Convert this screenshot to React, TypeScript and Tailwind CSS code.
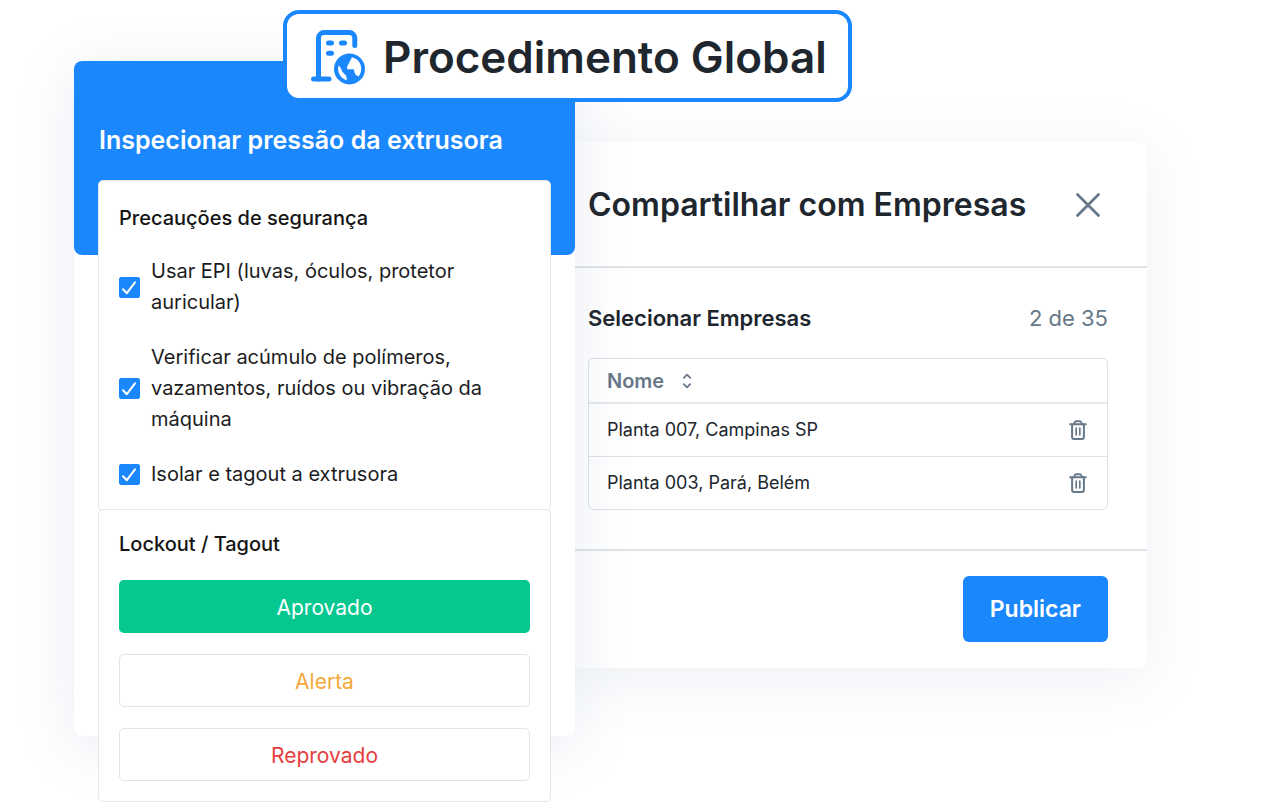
import { useState } from "react";
import type { ReactNode } from "react";

const precautions: string[] = [
  "Usar EPI (luvas, óculos, protetor auricular)",
  "Verificar acúmulo de polímeros, vazamentos, ruídos ou vibração da máquina",
  "Isolar e tagout a extrusora",
];

const companies: string[] = ["Planta 007, Campinas SP", "Planta 003, Pará, Belém"];

function BuildingGlobeIcon() {
  return (
    <svg width="54" height="56" viewBox="0 0 54 56" fill="none" className="shrink-0" aria-hidden="true">
      <path
        d="M7.500 50V9.100a5.500 5.500 0 0 1 5.500-5.500H38.300a5.500 5.500 0 0 1 5.500 5.500v7.500"
        stroke="#1a87fd"
        strokeWidth="5"
        strokeLinecap="round"
      />
      <path d="M2.500 50H18" stroke="#1a87fd" strokeWidth="5" strokeLinecap="round" />
      <path d="M17.500 14h3M30.500 14h3M17.500 24.200h3" stroke="#1a87fd" strokeWidth="5" strokeLinecap="round" />
      <circle cx="38.500" cy="39.900" r="15.500" fill="#1a87fd" />
      <path d="M40.900 28.300c3 .6 5.600 2.200 7.300 4.700 2.900 4.300 2.800 10.300-.7 14.600l-3.200-2.200-1.600-5.200h-6.400l-.2-2.600 2.900-5.300z" fill="#fff" />
      <path d="M27.600 36.300c-1.100 3.900-.3 8.200 2.300 11.300 1.600 1.900 3.600 3.100 5.900 3.700l-.5-4.400-4-4.200-1.500-3.600z" fill="#fff" />
    </svg>
  );
}

function CloseIcon() {
  return (
    <svg width="26" height="26" viewBox="0 0 26 26" fill="none" aria-hidden="true">
      <path d="M2.500 2.500l21 21M23.500 2.500l-21 21" stroke="#677889" strokeWidth="2.800" strokeLinecap="round" />
    </svg>
  );
}

function SortIcon() {
  return (
    <svg width="10" height="16" viewBox="0 0 10 16" fill="none" aria-hidden="true">
      <path
        d="M1.800 4.800L5 1.700 8.200 4.800M1.800 11.200L5 14.300 8.200 11.200"
        stroke="#677889"
        strokeWidth="1.800"
        strokeLinecap="round"
        strokeLinejoin="round"
      />
    </svg>
  );
}

function TrashIcon() {
  return (
    <svg width="18" height="20" viewBox="0 0 18 20" fill="none" stroke="#677889" strokeLinecap="round" aria-hidden="true">
      <path d="M1.200 4.300h15.600" strokeWidth="2" />
      <path d="M5 4l.8-1.900c.2-.6.700-.9 1.300-.9h3.800c.6 0 1.100.3 1.300.9L13 4" strokeWidth="1.900" />
      <path d="M3.100 4.500v12.600c0 1.100.8 1.900 1.900 1.900h8c1.100 0 1.900-.8 1.900-1.900V4.500" strokeWidth="2" />
      <path d="M7.200 8.200v6.600M10.800 8.200v6.600" strokeWidth="1.700" />
    </svg>
  );
}

function CheckRow({ label }: { label: string }) {
  const [checked, setChecked] = useState(true);
  return (
    <label className="flex items-center gap-[11px] text-[20px] leading-[31px] text-[#1c1c1e]">
      <span className="relative block size-[21px] shrink-0">
        <input
          type="checkbox"
          checked={checked}
          onChange={() => setChecked(!checked)}
          className="peer block size-[21px] appearance-none rounded-[2px] border border-[#1a87fd] bg-white checked:bg-[#1a87fd]"
        />
        <svg
          viewBox="0 0 21 21"
          fill="none"
          className="pointer-events-none absolute inset-0 hidden size-[21px] peer-checked:block"
          aria-hidden="true"
        >
          <path d="M4 12.200l3.800 4L16 5.300" stroke="#fff" strokeWidth="2" strokeLinecap="round" strokeLinejoin="round" />
        </svg>
      </span>
      <span>{label}</span>
    </label>
  );
}

function Panel({ title, className, children }: { title: string; className: string; children: ReactNode }) {
  return (
    <section className={`rounded-[5px] border border-[#e4e6ea] bg-white px-5 pb-5 ${className}`}>
      <h3 className="text-[20px] font-medium leading-[32px] text-[#141414]">{title}</h3>
      {children}
    </section>
  );
}

function ProcedureCard() {
  return (
    <article className="relative z-10 min-w-0 flex-[501] rounded-lg bg-white shadow-[0_10px_60px_rgba(80,110,160,0.13)]">
      <header className="h-[194px] rounded-lg bg-[#1a87fd] px-[25px] pt-[62px]">
        <h2 className="text-[25px] font-semibold leading-[34px] text-white">Inspecionar pressão da extrusora</h2>
      </header>
      <div className="-mt-[75px] -mb-[66px] mx-6 flex flex-col">
        <Panel title="Precauções de segurança" className="pt-[21px]">
          <div className="mt-[22px] flex flex-col gap-6">
            {precautions.map((label) => (
              <CheckRow key={label} label={label} />
            ))}
          </div>
        </Panel>
        <Panel title="Lockout / Tagout" className="-mt-[2px] pt-[18px]">
          <div className="mt-5 flex flex-col gap-[21px] text-[21px]">
            <button type="button" className="h-[53px] rounded-[5px] bg-[#04c88f] pt-0.5 text-white">
              Aprovado
            </button>
            <button type="button" className="h-[53px] rounded-[5px] border border-[#e2e4e8] bg-white pt-0.5 text-[#f5a93b]">
              Alerta
            </button>
            <button type="button" className="h-[53px] rounded-[5px] border border-[#e2e4e8] bg-white pt-0.5 text-[#e5403f]">
              Reprovado
            </button>
          </div>
        </Panel>
      </div>
    </article>
  );
}

function ShareDialog() {
  return (
    <section
      aria-label="Compartilhar com Empresas"
      className="mt-[81px] min-w-0 flex-[572] rounded-r-lg bg-white shadow-[0_10px_60px_rgba(80,110,160,0.10)]"
    >
      <header className="flex h-[126px] items-center justify-between border-b-2 border-[#e1e3e7] pt-0.5 pl-[13px] pr-[46px]">
        <h2 className="text-[32px] font-semibold leading-[40px]">Compartilhar com Empresas</h2>
        <button type="button" aria-label="Fechar">
          <CloseIcon />
        </button>
      </header>
      <div className="pt-[35px] pr-[39px] pb-[39px] pl-[13px]">
        <div className="flex items-center justify-between text-[22px] leading-[30px]">
          <h3 className="font-semibold">Selecionar Empresas</h3>
          <p className="text-[#677889]">2 de 35</p>
        </div>
        <div className="mt-[25px] rounded-[5px] border border-[#dfe1e6]">
          <table className="w-full border-collapse text-left">
            <thead>
              <tr className="h-11 border-b-2 border-[#e6e8eb]">
                <th scope="col" colSpan={2} className="px-[18px] text-[20px] font-semibold text-[#677889]">
                  <button type="button" className="flex items-center gap-[18px]">
                    Nome
                    <SortIcon />
                  </button>
                </th>
              </tr>
            </thead>
            <tbody>
              {companies.map((name) => (
                <tr key={name} className="h-[53px] border-b border-[#dfe1e6] last:border-b-0">
                  <td className="pl-[18px] text-[18px]">{name}</td>
                  <td className="w-12 pr-5">
                    <button type="button" aria-label={`Remover ${name}`} className="ml-auto block">
                      <TrashIcon />
                    </button>
                  </td>
                </tr>
              ))}
            </tbody>
          </table>
        </div>
      </div>
      <footer className="flex justify-end border-t-2 border-[#dfe2e8] pt-[25px] pr-[39px] pb-[26px]">
        <button type="button" className="h-[66px] rounded-md bg-[#1a87fd] px-[27px] text-[23px] font-semibold text-white">
          Publicar
        </button>
      </footer>
    </section>
  );
}

export default function App() {
  return (
    <div className="relative min-h-screen overflow-hidden bg-white font-['Inter',sans-serif] text-[#20262d]">
      <main className="flex items-start pt-[61px] pr-[117px] pb-2 pl-[74px]">
        <ProcedureCard />
        <ShareDialog />
      </main>
      <div className="absolute top-[10px] left-[283px] z-20 flex h-[92px] items-center gap-[18px] rounded-2xl border-4 border-[#1a87fd] bg-white pt-[2px] pr-[21px] pl-6">
        <BuildingGlobeIcon />
        <h1 className="whitespace-nowrap text-[44px] font-semibold leading-[56px]">Procedimento Global</h1>
      </div>
    </div>
  );
}
